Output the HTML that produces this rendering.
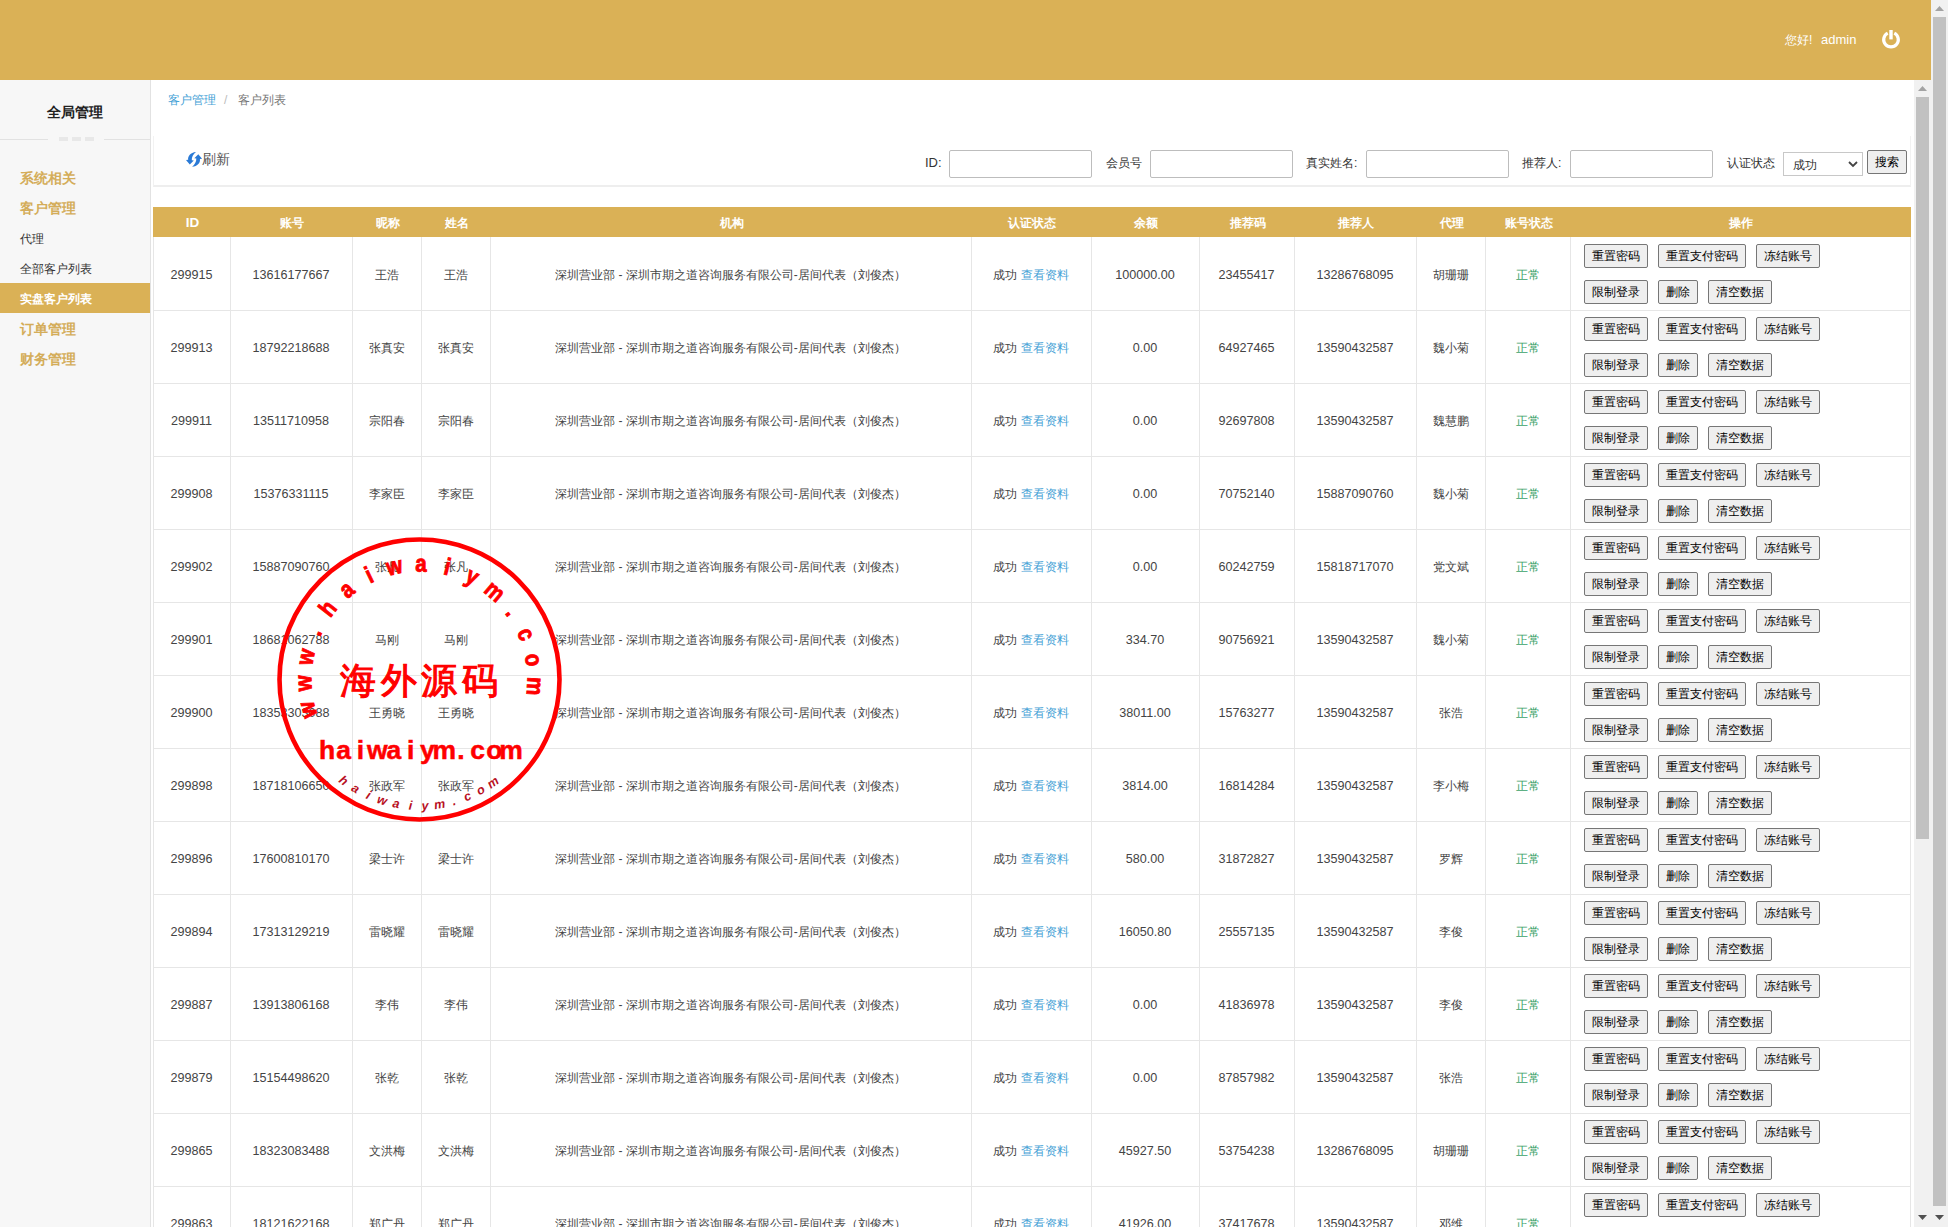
<!DOCTYPE html><html><head><meta charset="utf-8"><title>客户列表</title><style>
*{margin:0;padding:0;box-sizing:border-box}
html,body{width:1948px;height:1227px;overflow:hidden;background:#fff;font-family:"Liberation Sans",sans-serif;color:#333}
.a{position:absolute}
.hdr{left:0;top:0;width:1931px;height:80px;background:#dab156}
.side{left:0;top:80px;width:150px;height:1147px;background:#f7f7f7}
.sideb{left:150px;top:80px;width:1px;height:1147px;background:#e2e2e2}
.t{position:absolute;white-space:nowrap;line-height:1}
.c{position:absolute;text-align:center;white-space:nowrap;font-size:12.5px;color:#444}
.hl{position:absolute;height:1px;background:#e6e6e6}
.vl{position:absolute;width:1px;background:#e6e6e6}
.btn{position:absolute;height:24px;border:1px solid #767676;border-radius:2px;background:#efefef;font-size:12px;color:#000;text-align:center;line-height:23px;white-space:nowrap}
.inp{position:absolute;height:28px;border:1px solid #bdbdbd;border-radius:2px;background:#fff}
.sb{position:absolute;background:#f1f1f1}
.th{position:absolute;background:#c1c1c1}
</style></head><body>
<div class="a hdr"></div>
<div class="t" style="left:1785px;top:34px;font-size:12px;color:#fff">您好</div><div class="t" style="left:1809px;top:34px;font-size:12px;color:#fff">!</div><div class="t" style="left:1821px;top:33px;font-size:13px;color:#fff">admin</div>
<svg class="a" style="left:1880px;top:29px" width="22" height="22" viewBox="0 0 22 22"><path d="M7.7 4.1 A7.3 7.3 0 1 0 14.3 4.1" fill="none" stroke="#fff" stroke-width="3.2"/><rect x="9.3" y="1" width="3.4" height="9.4" fill="#fff"/></svg>
<div class="sb" style="left:1931px;top:0;width:17px;height:1227px"></div>
<div class="th" style="left:1933px;top:17px;width:13px;height:1189px"></div>
<div class="a side"></div><div class="a sideb"></div>
<div class="t" style="left:47px;top:105px;font-size:14px;font-weight:bold;color:#222">全局管理</div>
<div class="a" style="left:0;top:139px;width:48px;height:1px;background:#e2e2e2"></div>
<div class="a" style="left:104px;top:139px;width:46px;height:1px;background:#e2e2e2"></div>
<div class="a" style="left:59px;top:137px;width:9px;height:4px;background:#e8e8e8"></div>
<div class="a" style="left:72px;top:137px;width:9px;height:4px;background:#e8e8e8"></div>
<div class="a" style="left:85px;top:137px;width:9px;height:4px;background:#e8e8e8"></div>
<div class="t" style="left:20px;top:171px;font-size:14px;font-weight:bold;color:#d4ad5a">系统相关</div>
<div class="t" style="left:20px;top:201px;font-size:14px;font-weight:bold;color:#d4ad5a">客户管理</div>
<div class="t" style="left:20px;top:233px;font-size:12px;color:#333">代理</div>
<div class="t" style="left:20px;top:263px;font-size:12px;color:#333">全部客户列表</div>
<div class="a" style="left:0;top:283px;width:150px;height:30px;background:#dab156"></div>
<div class="t" style="left:20px;top:293px;font-size:12px;font-weight:bold;color:#fff">实盘客户列表</div>
<div class="t" style="left:20px;top:322px;font-size:14px;font-weight:bold;color:#d4ad5a">订单管理</div>
<div class="t" style="left:20px;top:352px;font-size:14px;font-weight:bold;color:#d4ad5a">财务管理</div>
<div class="sb" style="left:1914px;top:80px;width:17px;height:1147px"></div>
<div class="th" style="left:1916px;top:97px;width:13px;height:742px"></div>
<div class="t" style="left:168px;top:94px;font-size:12px;color:#45a2d6">客户管理</div>
<div class="t" style="left:224px;top:94px;font-size:12px;color:#bbb">/</div>
<div class="t" style="left:238px;top:94px;font-size:12px;color:#777">客户列表</div>
<div class="a" style="left:153px;top:136px;width:1758px;height:51px;border-left:1px solid #f2f2f2;border-right:1px solid #f2f2f2;border-bottom:2px solid #eeeeee"></div>
<div class="t" style="left:202px;top:152px;font-size:14px;color:#555">刷新</div>
<svg class="a" style="left:186px;top:152px" width="17" height="15" viewBox="0 0 17 15"><g fill="#2a7ad6"><path d="M10 0 C4.5 0.5 1.5 4.2 2.2 7.8 L0 8 L3.8 12.4 L7.8 8.4 L5.8 8.2 C5.6 5.4 7.2 2.2 10 0 Z"/><path transform="rotate(180 8.05 7.35)" d="M10 0 C4.5 0.5 1.5 4.2 2.2 7.8 L0 8 L3.8 12.4 L7.8 8.4 L5.8 8.2 C5.6 5.4 7.2 2.2 10 0 Z"/></g></svg>
<div class="t" style="left:925px;top:156px;font-size:13px;color:#333">ID:</div>
<div class="inp" style="left:949px;top:150px;width:143px"></div>
<div class="t" style="left:1106px;top:157px;font-size:12px;color:#333">会员号</div>
<div class="inp" style="left:1150px;top:150px;width:143px"></div>
<div class="t" style="left:1306px;top:157px;font-size:12px;color:#333">真实姓名:</div>
<div class="inp" style="left:1366px;top:150px;width:143px"></div>
<div class="t" style="left:1522px;top:157px;font-size:12px;color:#333">推荐人:</div>
<div class="inp" style="left:1570px;top:150px;width:143px"></div>
<div class="t" style="left:1727px;top:157px;font-size:12px;color:#333">认证状态</div>
<div class="a" style="left:1783px;top:152px;width:80px;height:24px;border:1px solid #c8c8c8;background:#fff"></div>
<div class="t" style="left:1793px;top:159px;font-size:12px;color:#333">成功</div>
<svg class="a" style="left:1848px;top:161px" width="10" height="7" viewBox="0 0 10 7"><path d="M1 1 L5 5 L9 1" fill="none" stroke="#444" stroke-width="1.8"/></svg>
<div class="btn" style="left:1867px;top:150px;width:40px">搜索</div>
<div class="a" style="left:153px;top:207px;width:1758px;height:30px;background:#dab156"></div>
<div class="c" style="left:154px;top:216px;width:77px;font-weight:bold;color:#fff;font-size:13.5px;line-height:14px;">ID</div>
<div class="c" style="left:231px;top:216px;width:122px;font-weight:bold;color:#fff;font-size:12px;line-height:14px;">账号</div>
<div class="c" style="left:353px;top:216px;width:69px;font-weight:bold;color:#fff;font-size:12px;line-height:14px;">昵称</div>
<div class="c" style="left:422px;top:216px;width:69px;font-weight:bold;color:#fff;font-size:12px;line-height:14px;">姓名</div>
<div class="c" style="left:491px;top:216px;width:481px;font-weight:bold;color:#fff;font-size:12px;line-height:14px;">机构</div>
<div class="c" style="left:972px;top:216px;width:120px;font-weight:bold;color:#fff;font-size:12px;line-height:14px;">认证状态</div>
<div class="c" style="left:1092px;top:216px;width:108px;font-weight:bold;color:#fff;font-size:12px;line-height:14px;">余额</div>
<div class="c" style="left:1200px;top:216px;width:95px;font-weight:bold;color:#fff;font-size:12px;line-height:14px;">推荐码</div>
<div class="c" style="left:1295px;top:216px;width:122px;font-weight:bold;color:#fff;font-size:12px;line-height:14px;">推荐人</div>
<div class="c" style="left:1417px;top:216px;width:69px;font-weight:bold;color:#fff;font-size:12px;line-height:14px;">代理</div>
<div class="c" style="left:1486px;top:216px;width:85px;font-weight:bold;color:#fff;font-size:12px;line-height:14px;">账号状态</div>
<div class="c" style="left:1571px;top:216px;width:340px;font-weight:bold;color:#fff;font-size:12px;line-height:14px;">操作</div>
<div class="vl" style="left:153px;top:237px;height:990px"></div>
<div class="vl" style="left:230px;top:237px;height:990px"></div>
<div class="vl" style="left:352px;top:237px;height:990px"></div>
<div class="vl" style="left:421px;top:237px;height:990px"></div>
<div class="vl" style="left:490px;top:237px;height:990px"></div>
<div class="vl" style="left:971px;top:237px;height:990px"></div>
<div class="vl" style="left:1091px;top:237px;height:990px"></div>
<div class="vl" style="left:1199px;top:237px;height:990px"></div>
<div class="vl" style="left:1294px;top:237px;height:990px"></div>
<div class="vl" style="left:1416px;top:237px;height:990px"></div>
<div class="vl" style="left:1485px;top:237px;height:990px"></div>
<div class="vl" style="left:1570px;top:237px;height:990px"></div>
<div class="vl" style="left:1910px;top:237px;height:990px"></div>
<div class="hl" style="left:153px;top:310px;width:1758px"></div>
<div class="hl" style="left:153px;top:383px;width:1758px"></div>
<div class="hl" style="left:153px;top:456px;width:1758px"></div>
<div class="hl" style="left:153px;top:529px;width:1758px"></div>
<div class="hl" style="left:153px;top:602px;width:1758px"></div>
<div class="hl" style="left:153px;top:675px;width:1758px"></div>
<div class="hl" style="left:153px;top:748px;width:1758px"></div>
<div class="hl" style="left:153px;top:821px;width:1758px"></div>
<div class="hl" style="left:153px;top:894px;width:1758px"></div>
<div class="hl" style="left:153px;top:967px;width:1758px"></div>
<div class="hl" style="left:153px;top:1040px;width:1758px"></div>
<div class="hl" style="left:153px;top:1113px;width:1758px"></div>
<div class="hl" style="left:153px;top:1186px;width:1758px"></div>
<div class="c" style="left:153px;top:268px;width:77px;line-height:14px;font-size:12.6px">299915</div>
<div class="c" style="left:230px;top:268px;width:122px;line-height:14px;font-size:12.6px">13616177667</div>
<div class="c" style="left:352px;top:268px;width:69px;line-height:14px;font-size:12px">王浩</div>
<div class="c" style="left:421px;top:268px;width:69px;line-height:14px;font-size:12px">王浩</div>
<div class="c" style="left:490px;top:268px;width:481px;line-height:14px;font-size:12px">深圳营业部 - 深圳市期之道咨询服务有限公司-居间代表（刘俊杰）</div>
<div class="c" style="left:971px;top:268px;width:120px;line-height:14px;font-size:12px">成功 <span style="color:#45a2d6">查看资料</span></div>
<div class="c" style="left:1091px;top:268px;width:108px;line-height:14px;font-size:12.6px">100000.00</div>
<div class="c" style="left:1199px;top:268px;width:95px;line-height:14px;font-size:12.6px">23455417</div>
<div class="c" style="left:1294px;top:268px;width:122px;line-height:14px;font-size:12.6px">13286768095</div>
<div class="c" style="left:1416px;top:268px;width:69px;line-height:14px;font-size:12px">胡珊珊</div>
<div class="c" style="left:1485px;top:268px;width:85px;line-height:14px;color:#3ba268;font-size:12px">正常</div>
<div class="btn" style="left:1584px;top:244px;width:64px">重置密码</div>
<div class="btn" style="left:1658px;top:244px;width:88px">重置支付密码</div>
<div class="btn" style="left:1756px;top:244px;width:64px">冻结账号</div>
<div class="btn" style="left:1584px;top:280px;width:64px">限制登录</div>
<div class="btn" style="left:1658px;top:280px;width:40px">删除</div>
<div class="btn" style="left:1708px;top:280px;width:64px">清空数据</div>
<div class="c" style="left:153px;top:341px;width:77px;line-height:14px;font-size:12.6px">299913</div>
<div class="c" style="left:230px;top:341px;width:122px;line-height:14px;font-size:12.6px">18792218688</div>
<div class="c" style="left:352px;top:341px;width:69px;line-height:14px;font-size:12px">张真安</div>
<div class="c" style="left:421px;top:341px;width:69px;line-height:14px;font-size:12px">张真安</div>
<div class="c" style="left:490px;top:341px;width:481px;line-height:14px;font-size:12px">深圳营业部 - 深圳市期之道咨询服务有限公司-居间代表（刘俊杰）</div>
<div class="c" style="left:971px;top:341px;width:120px;line-height:14px;font-size:12px">成功 <span style="color:#45a2d6">查看资料</span></div>
<div class="c" style="left:1091px;top:341px;width:108px;line-height:14px;font-size:12.6px">0.00</div>
<div class="c" style="left:1199px;top:341px;width:95px;line-height:14px;font-size:12.6px">64927465</div>
<div class="c" style="left:1294px;top:341px;width:122px;line-height:14px;font-size:12.6px">13590432587</div>
<div class="c" style="left:1416px;top:341px;width:69px;line-height:14px;font-size:12px">魏小菊</div>
<div class="c" style="left:1485px;top:341px;width:85px;line-height:14px;color:#3ba268;font-size:12px">正常</div>
<div class="btn" style="left:1584px;top:317px;width:64px">重置密码</div>
<div class="btn" style="left:1658px;top:317px;width:88px">重置支付密码</div>
<div class="btn" style="left:1756px;top:317px;width:64px">冻结账号</div>
<div class="btn" style="left:1584px;top:353px;width:64px">限制登录</div>
<div class="btn" style="left:1658px;top:353px;width:40px">删除</div>
<div class="btn" style="left:1708px;top:353px;width:64px">清空数据</div>
<div class="c" style="left:153px;top:414px;width:77px;line-height:14px;font-size:12.6px">299911</div>
<div class="c" style="left:230px;top:414px;width:122px;line-height:14px;font-size:12.6px">13511710958</div>
<div class="c" style="left:352px;top:414px;width:69px;line-height:14px;font-size:12px">宗阳春</div>
<div class="c" style="left:421px;top:414px;width:69px;line-height:14px;font-size:12px">宗阳春</div>
<div class="c" style="left:490px;top:414px;width:481px;line-height:14px;font-size:12px">深圳营业部 - 深圳市期之道咨询服务有限公司-居间代表（刘俊杰）</div>
<div class="c" style="left:971px;top:414px;width:120px;line-height:14px;font-size:12px">成功 <span style="color:#45a2d6">查看资料</span></div>
<div class="c" style="left:1091px;top:414px;width:108px;line-height:14px;font-size:12.6px">0.00</div>
<div class="c" style="left:1199px;top:414px;width:95px;line-height:14px;font-size:12.6px">92697808</div>
<div class="c" style="left:1294px;top:414px;width:122px;line-height:14px;font-size:12.6px">13590432587</div>
<div class="c" style="left:1416px;top:414px;width:69px;line-height:14px;font-size:12px">魏慧鹏</div>
<div class="c" style="left:1485px;top:414px;width:85px;line-height:14px;color:#3ba268;font-size:12px">正常</div>
<div class="btn" style="left:1584px;top:390px;width:64px">重置密码</div>
<div class="btn" style="left:1658px;top:390px;width:88px">重置支付密码</div>
<div class="btn" style="left:1756px;top:390px;width:64px">冻结账号</div>
<div class="btn" style="left:1584px;top:426px;width:64px">限制登录</div>
<div class="btn" style="left:1658px;top:426px;width:40px">删除</div>
<div class="btn" style="left:1708px;top:426px;width:64px">清空数据</div>
<div class="c" style="left:153px;top:487px;width:77px;line-height:14px;font-size:12.6px">299908</div>
<div class="c" style="left:230px;top:487px;width:122px;line-height:14px;font-size:12.6px">15376331115</div>
<div class="c" style="left:352px;top:487px;width:69px;line-height:14px;font-size:12px">李家臣</div>
<div class="c" style="left:421px;top:487px;width:69px;line-height:14px;font-size:12px">李家臣</div>
<div class="c" style="left:490px;top:487px;width:481px;line-height:14px;font-size:12px">深圳营业部 - 深圳市期之道咨询服务有限公司-居间代表（刘俊杰）</div>
<div class="c" style="left:971px;top:487px;width:120px;line-height:14px;font-size:12px">成功 <span style="color:#45a2d6">查看资料</span></div>
<div class="c" style="left:1091px;top:487px;width:108px;line-height:14px;font-size:12.6px">0.00</div>
<div class="c" style="left:1199px;top:487px;width:95px;line-height:14px;font-size:12.6px">70752140</div>
<div class="c" style="left:1294px;top:487px;width:122px;line-height:14px;font-size:12.6px">15887090760</div>
<div class="c" style="left:1416px;top:487px;width:69px;line-height:14px;font-size:12px">魏小菊</div>
<div class="c" style="left:1485px;top:487px;width:85px;line-height:14px;color:#3ba268;font-size:12px">正常</div>
<div class="btn" style="left:1584px;top:463px;width:64px">重置密码</div>
<div class="btn" style="left:1658px;top:463px;width:88px">重置支付密码</div>
<div class="btn" style="left:1756px;top:463px;width:64px">冻结账号</div>
<div class="btn" style="left:1584px;top:499px;width:64px">限制登录</div>
<div class="btn" style="left:1658px;top:499px;width:40px">删除</div>
<div class="btn" style="left:1708px;top:499px;width:64px">清空数据</div>
<div class="c" style="left:153px;top:560px;width:77px;line-height:14px;font-size:12.6px">299902</div>
<div class="c" style="left:230px;top:560px;width:122px;line-height:14px;font-size:12.6px">15887090760</div>
<div class="c" style="left:352px;top:560px;width:69px;line-height:14px;font-size:12px">张凡</div>
<div class="c" style="left:421px;top:560px;width:69px;line-height:14px;font-size:12px">张凡</div>
<div class="c" style="left:490px;top:560px;width:481px;line-height:14px;font-size:12px">深圳营业部 - 深圳市期之道咨询服务有限公司-居间代表（刘俊杰）</div>
<div class="c" style="left:971px;top:560px;width:120px;line-height:14px;font-size:12px">成功 <span style="color:#45a2d6">查看资料</span></div>
<div class="c" style="left:1091px;top:560px;width:108px;line-height:14px;font-size:12.6px">0.00</div>
<div class="c" style="left:1199px;top:560px;width:95px;line-height:14px;font-size:12.6px">60242759</div>
<div class="c" style="left:1294px;top:560px;width:122px;line-height:14px;font-size:12.6px">15818717070</div>
<div class="c" style="left:1416px;top:560px;width:69px;line-height:14px;font-size:12px">党文斌</div>
<div class="c" style="left:1485px;top:560px;width:85px;line-height:14px;color:#3ba268;font-size:12px">正常</div>
<div class="btn" style="left:1584px;top:536px;width:64px">重置密码</div>
<div class="btn" style="left:1658px;top:536px;width:88px">重置支付密码</div>
<div class="btn" style="left:1756px;top:536px;width:64px">冻结账号</div>
<div class="btn" style="left:1584px;top:572px;width:64px">限制登录</div>
<div class="btn" style="left:1658px;top:572px;width:40px">删除</div>
<div class="btn" style="left:1708px;top:572px;width:64px">清空数据</div>
<div class="c" style="left:153px;top:633px;width:77px;line-height:14px;font-size:12.6px">299901</div>
<div class="c" style="left:230px;top:633px;width:122px;line-height:14px;font-size:12.6px">18681062788</div>
<div class="c" style="left:352px;top:633px;width:69px;line-height:14px;font-size:12px">马刚</div>
<div class="c" style="left:421px;top:633px;width:69px;line-height:14px;font-size:12px">马刚</div>
<div class="c" style="left:490px;top:633px;width:481px;line-height:14px;font-size:12px">深圳营业部 - 深圳市期之道咨询服务有限公司-居间代表（刘俊杰）</div>
<div class="c" style="left:971px;top:633px;width:120px;line-height:14px;font-size:12px">成功 <span style="color:#45a2d6">查看资料</span></div>
<div class="c" style="left:1091px;top:633px;width:108px;line-height:14px;font-size:12.6px">334.70</div>
<div class="c" style="left:1199px;top:633px;width:95px;line-height:14px;font-size:12.6px">90756921</div>
<div class="c" style="left:1294px;top:633px;width:122px;line-height:14px;font-size:12.6px">13590432587</div>
<div class="c" style="left:1416px;top:633px;width:69px;line-height:14px;font-size:12px">魏小菊</div>
<div class="c" style="left:1485px;top:633px;width:85px;line-height:14px;color:#3ba268;font-size:12px">正常</div>
<div class="btn" style="left:1584px;top:609px;width:64px">重置密码</div>
<div class="btn" style="left:1658px;top:609px;width:88px">重置支付密码</div>
<div class="btn" style="left:1756px;top:609px;width:64px">冻结账号</div>
<div class="btn" style="left:1584px;top:645px;width:64px">限制登录</div>
<div class="btn" style="left:1658px;top:645px;width:40px">删除</div>
<div class="btn" style="left:1708px;top:645px;width:64px">清空数据</div>
<div class="c" style="left:153px;top:706px;width:77px;line-height:14px;font-size:12.6px">299900</div>
<div class="c" style="left:230px;top:706px;width:122px;line-height:14px;font-size:12.6px">18353303088</div>
<div class="c" style="left:352px;top:706px;width:69px;line-height:14px;font-size:12px">王勇晓</div>
<div class="c" style="left:421px;top:706px;width:69px;line-height:14px;font-size:12px">王勇晓</div>
<div class="c" style="left:490px;top:706px;width:481px;line-height:14px;font-size:12px">深圳营业部 - 深圳市期之道咨询服务有限公司-居间代表（刘俊杰）</div>
<div class="c" style="left:971px;top:706px;width:120px;line-height:14px;font-size:12px">成功 <span style="color:#45a2d6">查看资料</span></div>
<div class="c" style="left:1091px;top:706px;width:108px;line-height:14px;font-size:12.6px">38011.00</div>
<div class="c" style="left:1199px;top:706px;width:95px;line-height:14px;font-size:12.6px">15763277</div>
<div class="c" style="left:1294px;top:706px;width:122px;line-height:14px;font-size:12.6px">13590432587</div>
<div class="c" style="left:1416px;top:706px;width:69px;line-height:14px;font-size:12px">张浩</div>
<div class="c" style="left:1485px;top:706px;width:85px;line-height:14px;color:#3ba268;font-size:12px">正常</div>
<div class="btn" style="left:1584px;top:682px;width:64px">重置密码</div>
<div class="btn" style="left:1658px;top:682px;width:88px">重置支付密码</div>
<div class="btn" style="left:1756px;top:682px;width:64px">冻结账号</div>
<div class="btn" style="left:1584px;top:718px;width:64px">限制登录</div>
<div class="btn" style="left:1658px;top:718px;width:40px">删除</div>
<div class="btn" style="left:1708px;top:718px;width:64px">清空数据</div>
<div class="c" style="left:153px;top:779px;width:77px;line-height:14px;font-size:12.6px">299898</div>
<div class="c" style="left:230px;top:779px;width:122px;line-height:14px;font-size:12.6px">18718106650</div>
<div class="c" style="left:352px;top:779px;width:69px;line-height:14px;font-size:12px">张政军</div>
<div class="c" style="left:421px;top:779px;width:69px;line-height:14px;font-size:12px">张政军</div>
<div class="c" style="left:490px;top:779px;width:481px;line-height:14px;font-size:12px">深圳营业部 - 深圳市期之道咨询服务有限公司-居间代表（刘俊杰）</div>
<div class="c" style="left:971px;top:779px;width:120px;line-height:14px;font-size:12px">成功 <span style="color:#45a2d6">查看资料</span></div>
<div class="c" style="left:1091px;top:779px;width:108px;line-height:14px;font-size:12.6px">3814.00</div>
<div class="c" style="left:1199px;top:779px;width:95px;line-height:14px;font-size:12.6px">16814284</div>
<div class="c" style="left:1294px;top:779px;width:122px;line-height:14px;font-size:12.6px">13590432587</div>
<div class="c" style="left:1416px;top:779px;width:69px;line-height:14px;font-size:12px">李小梅</div>
<div class="c" style="left:1485px;top:779px;width:85px;line-height:14px;color:#3ba268;font-size:12px">正常</div>
<div class="btn" style="left:1584px;top:755px;width:64px">重置密码</div>
<div class="btn" style="left:1658px;top:755px;width:88px">重置支付密码</div>
<div class="btn" style="left:1756px;top:755px;width:64px">冻结账号</div>
<div class="btn" style="left:1584px;top:791px;width:64px">限制登录</div>
<div class="btn" style="left:1658px;top:791px;width:40px">删除</div>
<div class="btn" style="left:1708px;top:791px;width:64px">清空数据</div>
<div class="c" style="left:153px;top:852px;width:77px;line-height:14px;font-size:12.6px">299896</div>
<div class="c" style="left:230px;top:852px;width:122px;line-height:14px;font-size:12.6px">17600810170</div>
<div class="c" style="left:352px;top:852px;width:69px;line-height:14px;font-size:12px">梁士许</div>
<div class="c" style="left:421px;top:852px;width:69px;line-height:14px;font-size:12px">梁士许</div>
<div class="c" style="left:490px;top:852px;width:481px;line-height:14px;font-size:12px">深圳营业部 - 深圳市期之道咨询服务有限公司-居间代表（刘俊杰）</div>
<div class="c" style="left:971px;top:852px;width:120px;line-height:14px;font-size:12px">成功 <span style="color:#45a2d6">查看资料</span></div>
<div class="c" style="left:1091px;top:852px;width:108px;line-height:14px;font-size:12.6px">580.00</div>
<div class="c" style="left:1199px;top:852px;width:95px;line-height:14px;font-size:12.6px">31872827</div>
<div class="c" style="left:1294px;top:852px;width:122px;line-height:14px;font-size:12.6px">13590432587</div>
<div class="c" style="left:1416px;top:852px;width:69px;line-height:14px;font-size:12px">罗辉</div>
<div class="c" style="left:1485px;top:852px;width:85px;line-height:14px;color:#3ba268;font-size:12px">正常</div>
<div class="btn" style="left:1584px;top:828px;width:64px">重置密码</div>
<div class="btn" style="left:1658px;top:828px;width:88px">重置支付密码</div>
<div class="btn" style="left:1756px;top:828px;width:64px">冻结账号</div>
<div class="btn" style="left:1584px;top:864px;width:64px">限制登录</div>
<div class="btn" style="left:1658px;top:864px;width:40px">删除</div>
<div class="btn" style="left:1708px;top:864px;width:64px">清空数据</div>
<div class="c" style="left:153px;top:925px;width:77px;line-height:14px;font-size:12.6px">299894</div>
<div class="c" style="left:230px;top:925px;width:122px;line-height:14px;font-size:12.6px">17313129219</div>
<div class="c" style="left:352px;top:925px;width:69px;line-height:14px;font-size:12px">雷晓耀</div>
<div class="c" style="left:421px;top:925px;width:69px;line-height:14px;font-size:12px">雷晓耀</div>
<div class="c" style="left:490px;top:925px;width:481px;line-height:14px;font-size:12px">深圳营业部 - 深圳市期之道咨询服务有限公司-居间代表（刘俊杰）</div>
<div class="c" style="left:971px;top:925px;width:120px;line-height:14px;font-size:12px">成功 <span style="color:#45a2d6">查看资料</span></div>
<div class="c" style="left:1091px;top:925px;width:108px;line-height:14px;font-size:12.6px">16050.80</div>
<div class="c" style="left:1199px;top:925px;width:95px;line-height:14px;font-size:12.6px">25557135</div>
<div class="c" style="left:1294px;top:925px;width:122px;line-height:14px;font-size:12.6px">13590432587</div>
<div class="c" style="left:1416px;top:925px;width:69px;line-height:14px;font-size:12px">李俊</div>
<div class="c" style="left:1485px;top:925px;width:85px;line-height:14px;color:#3ba268;font-size:12px">正常</div>
<div class="btn" style="left:1584px;top:901px;width:64px">重置密码</div>
<div class="btn" style="left:1658px;top:901px;width:88px">重置支付密码</div>
<div class="btn" style="left:1756px;top:901px;width:64px">冻结账号</div>
<div class="btn" style="left:1584px;top:937px;width:64px">限制登录</div>
<div class="btn" style="left:1658px;top:937px;width:40px">删除</div>
<div class="btn" style="left:1708px;top:937px;width:64px">清空数据</div>
<div class="c" style="left:153px;top:998px;width:77px;line-height:14px;font-size:12.6px">299887</div>
<div class="c" style="left:230px;top:998px;width:122px;line-height:14px;font-size:12.6px">13913806168</div>
<div class="c" style="left:352px;top:998px;width:69px;line-height:14px;font-size:12px">李伟</div>
<div class="c" style="left:421px;top:998px;width:69px;line-height:14px;font-size:12px">李伟</div>
<div class="c" style="left:490px;top:998px;width:481px;line-height:14px;font-size:12px">深圳营业部 - 深圳市期之道咨询服务有限公司-居间代表（刘俊杰）</div>
<div class="c" style="left:971px;top:998px;width:120px;line-height:14px;font-size:12px">成功 <span style="color:#45a2d6">查看资料</span></div>
<div class="c" style="left:1091px;top:998px;width:108px;line-height:14px;font-size:12.6px">0.00</div>
<div class="c" style="left:1199px;top:998px;width:95px;line-height:14px;font-size:12.6px">41836978</div>
<div class="c" style="left:1294px;top:998px;width:122px;line-height:14px;font-size:12.6px">13590432587</div>
<div class="c" style="left:1416px;top:998px;width:69px;line-height:14px;font-size:12px">李俊</div>
<div class="c" style="left:1485px;top:998px;width:85px;line-height:14px;color:#3ba268;font-size:12px">正常</div>
<div class="btn" style="left:1584px;top:974px;width:64px">重置密码</div>
<div class="btn" style="left:1658px;top:974px;width:88px">重置支付密码</div>
<div class="btn" style="left:1756px;top:974px;width:64px">冻结账号</div>
<div class="btn" style="left:1584px;top:1010px;width:64px">限制登录</div>
<div class="btn" style="left:1658px;top:1010px;width:40px">删除</div>
<div class="btn" style="left:1708px;top:1010px;width:64px">清空数据</div>
<div class="c" style="left:153px;top:1071px;width:77px;line-height:14px;font-size:12.6px">299879</div>
<div class="c" style="left:230px;top:1071px;width:122px;line-height:14px;font-size:12.6px">15154498620</div>
<div class="c" style="left:352px;top:1071px;width:69px;line-height:14px;font-size:12px">张乾</div>
<div class="c" style="left:421px;top:1071px;width:69px;line-height:14px;font-size:12px">张乾</div>
<div class="c" style="left:490px;top:1071px;width:481px;line-height:14px;font-size:12px">深圳营业部 - 深圳市期之道咨询服务有限公司-居间代表（刘俊杰）</div>
<div class="c" style="left:971px;top:1071px;width:120px;line-height:14px;font-size:12px">成功 <span style="color:#45a2d6">查看资料</span></div>
<div class="c" style="left:1091px;top:1071px;width:108px;line-height:14px;font-size:12.6px">0.00</div>
<div class="c" style="left:1199px;top:1071px;width:95px;line-height:14px;font-size:12.6px">87857982</div>
<div class="c" style="left:1294px;top:1071px;width:122px;line-height:14px;font-size:12.6px">13590432587</div>
<div class="c" style="left:1416px;top:1071px;width:69px;line-height:14px;font-size:12px">张浩</div>
<div class="c" style="left:1485px;top:1071px;width:85px;line-height:14px;color:#3ba268;font-size:12px">正常</div>
<div class="btn" style="left:1584px;top:1047px;width:64px">重置密码</div>
<div class="btn" style="left:1658px;top:1047px;width:88px">重置支付密码</div>
<div class="btn" style="left:1756px;top:1047px;width:64px">冻结账号</div>
<div class="btn" style="left:1584px;top:1083px;width:64px">限制登录</div>
<div class="btn" style="left:1658px;top:1083px;width:40px">删除</div>
<div class="btn" style="left:1708px;top:1083px;width:64px">清空数据</div>
<div class="c" style="left:153px;top:1144px;width:77px;line-height:14px;font-size:12.6px">299865</div>
<div class="c" style="left:230px;top:1144px;width:122px;line-height:14px;font-size:12.6px">18323083488</div>
<div class="c" style="left:352px;top:1144px;width:69px;line-height:14px;font-size:12px">文洪梅</div>
<div class="c" style="left:421px;top:1144px;width:69px;line-height:14px;font-size:12px">文洪梅</div>
<div class="c" style="left:490px;top:1144px;width:481px;line-height:14px;font-size:12px">深圳营业部 - 深圳市期之道咨询服务有限公司-居间代表（刘俊杰）</div>
<div class="c" style="left:971px;top:1144px;width:120px;line-height:14px;font-size:12px">成功 <span style="color:#45a2d6">查看资料</span></div>
<div class="c" style="left:1091px;top:1144px;width:108px;line-height:14px;font-size:12.6px">45927.50</div>
<div class="c" style="left:1199px;top:1144px;width:95px;line-height:14px;font-size:12.6px">53754238</div>
<div class="c" style="left:1294px;top:1144px;width:122px;line-height:14px;font-size:12.6px">13286768095</div>
<div class="c" style="left:1416px;top:1144px;width:69px;line-height:14px;font-size:12px">胡珊珊</div>
<div class="c" style="left:1485px;top:1144px;width:85px;line-height:14px;color:#3ba268;font-size:12px">正常</div>
<div class="btn" style="left:1584px;top:1120px;width:64px">重置密码</div>
<div class="btn" style="left:1658px;top:1120px;width:88px">重置支付密码</div>
<div class="btn" style="left:1756px;top:1120px;width:64px">冻结账号</div>
<div class="btn" style="left:1584px;top:1156px;width:64px">限制登录</div>
<div class="btn" style="left:1658px;top:1156px;width:40px">删除</div>
<div class="btn" style="left:1708px;top:1156px;width:64px">清空数据</div>
<div class="c" style="left:153px;top:1217px;width:77px;line-height:14px;font-size:12.6px">299863</div>
<div class="c" style="left:230px;top:1217px;width:122px;line-height:14px;font-size:12.6px">18121622168</div>
<div class="c" style="left:352px;top:1217px;width:69px;line-height:14px;font-size:12px">郑广丹</div>
<div class="c" style="left:421px;top:1217px;width:69px;line-height:14px;font-size:12px">郑广丹</div>
<div class="c" style="left:490px;top:1217px;width:481px;line-height:14px;font-size:12px">深圳营业部 - 深圳市期之道咨询服务有限公司-居间代表（刘俊杰）</div>
<div class="c" style="left:971px;top:1217px;width:120px;line-height:14px;font-size:12px">成功 <span style="color:#45a2d6">查看资料</span></div>
<div class="c" style="left:1091px;top:1217px;width:108px;line-height:14px;font-size:12.6px">41926.00</div>
<div class="c" style="left:1199px;top:1217px;width:95px;line-height:14px;font-size:12.6px">37417678</div>
<div class="c" style="left:1294px;top:1217px;width:122px;line-height:14px;font-size:12.6px">13590432587</div>
<div class="c" style="left:1416px;top:1217px;width:69px;line-height:14px;font-size:12px">邓维</div>
<div class="c" style="left:1485px;top:1217px;width:85px;line-height:14px;color:#3ba268;font-size:12px">正常</div>
<div class="btn" style="left:1584px;top:1193px;width:64px">重置密码</div>
<div class="btn" style="left:1658px;top:1193px;width:88px">重置支付密码</div>
<div class="btn" style="left:1756px;top:1193px;width:64px">冻结账号</div>
<div class="btn" style="left:1584px;top:1229px;width:64px">限制登录</div>
<div class="btn" style="left:1658px;top:1229px;width:40px">删除</div>
<div class="btn" style="left:1708px;top:1229px;width:64px">清空数据</div>
<svg class="a" style="left:270px;top:530px;overflow:visible" width="300" height="300" viewBox="0 0 300 300"><circle cx="149.5" cy="149.5" r="140" fill="none" stroke="#f00" stroke-width="4.6"/><text transform="translate(45.28 177.82) rotate(254.80) scale(0.85 1)" text-anchor="middle" font-family="Liberation Sans" font-weight="bold" font-size="24" fill="#f00" stroke="#f00" stroke-width="0.9">w</text><text transform="translate(41.56 153.19) rotate(268.04) scale(0.85 1)" text-anchor="middle" font-family="Liberation Sans" font-weight="bold" font-size="24" fill="#f00" stroke="#f00" stroke-width="0.9">w</text><text transform="translate(43.59 128.37) rotate(281.28) scale(0.85 1)" text-anchor="middle" font-family="Liberation Sans" font-weight="bold" font-size="24" fill="#f00" stroke="#f00" stroke-width="0.9">w</text><text transform="translate(51.24 104.68) rotate(294.52) scale(0.85 1)" text-anchor="middle" font-family="Liberation Sans" font-weight="bold" font-size="24" fill="#f00" stroke="#f00" stroke-width="0.9">.</text><text transform="translate(64.12 83.37) rotate(307.76) scale(0.85 1)" text-anchor="middle" font-family="Liberation Sans" font-weight="bold" font-size="24" fill="#f00" stroke="#f00" stroke-width="0.9">h</text><text transform="translate(81.53 65.57) rotate(321.00) scale(0.85 1)" text-anchor="middle" font-family="Liberation Sans" font-weight="bold" font-size="24" fill="#f00" stroke="#f00" stroke-width="0.9">a</text><text transform="translate(102.56 52.23) rotate(334.24) scale(0.85 1)" text-anchor="middle" font-family="Liberation Sans" font-weight="bold" font-size="24" fill="#f00" stroke="#f00" stroke-width="0.9">i</text><text transform="translate(126.09 44.07) rotate(347.48) scale(0.85 1)" text-anchor="middle" font-family="Liberation Sans" font-weight="bold" font-size="24" fill="#f00" stroke="#f00" stroke-width="0.9">w</text><text transform="translate(150.86 41.51) rotate(360.72) scale(0.85 1)" text-anchor="middle" font-family="Liberation Sans" font-weight="bold" font-size="24" fill="#f00" stroke="#f00" stroke-width="0.9">a</text><text transform="translate(175.55 44.69) rotate(373.96) scale(0.85 1)" text-anchor="middle" font-family="Liberation Sans" font-weight="bold" font-size="24" fill="#f00" stroke="#f00" stroke-width="0.9">i</text><text transform="translate(198.87 53.44) rotate(387.20) scale(0.85 1)" text-anchor="middle" font-family="Liberation Sans" font-weight="bold" font-size="24" fill="#f00" stroke="#f00" stroke-width="0.9">y</text><text transform="translate(219.55 67.30) rotate(400.44) scale(0.85 1)" text-anchor="middle" font-family="Liberation Sans" font-weight="bold" font-size="24" fill="#f00" stroke="#f00" stroke-width="0.9">m</text><text transform="translate(236.52 85.53) rotate(413.68) scale(0.85 1)" text-anchor="middle" font-family="Liberation Sans" font-weight="bold" font-size="24" fill="#f00" stroke="#f00" stroke-width="0.9">.</text><text transform="translate(248.86 107.16) rotate(426.92) scale(0.85 1)" text-anchor="middle" font-family="Liberation Sans" font-weight="bold" font-size="24" fill="#f00" stroke="#f00" stroke-width="0.9">c</text><text transform="translate(255.91 131.04) rotate(440.16) scale(0.85 1)" text-anchor="middle" font-family="Liberation Sans" font-weight="bold" font-size="24" fill="#f00" stroke="#f00" stroke-width="0.9">o</text><text transform="translate(257.31 155.91) rotate(453.40) scale(0.85 1)" text-anchor="middle" font-family="Liberation Sans" font-weight="bold" font-size="24" fill="#f00" stroke="#f00" stroke-width="0.9">m</text><text transform="translate(70.96 253.72) rotate(37.00)" text-anchor="middle" font-family="Liberation Sans" font-style="italic" font-weight="bold" font-size="12.5" fill="#b8101e">h</text><text transform="translate(83.44 262.05) rotate(30.41)" text-anchor="middle" font-family="Liberation Sans" font-style="italic" font-weight="bold" font-size="12.5" fill="#b8101e">a</text><text transform="translate(96.80 268.88) rotate(23.82)" text-anchor="middle" font-family="Liberation Sans" font-style="italic" font-weight="bold" font-size="12.5" fill="#b8101e">i</text><text transform="translate(110.84 274.14) rotate(17.23)" text-anchor="middle" font-family="Liberation Sans" font-style="italic" font-weight="bold" font-size="12.5" fill="#b8101e">w</text><text transform="translate(125.40 277.76) rotate(10.64)" text-anchor="middle" font-family="Liberation Sans" font-style="italic" font-weight="bold" font-size="12.5" fill="#b8101e">a</text><text transform="translate(140.28 279.67) rotate(4.05)" text-anchor="middle" font-family="Liberation Sans" font-style="italic" font-weight="bold" font-size="12.5" fill="#b8101e">i</text><text transform="translate(155.28 279.87) rotate(-2.54)" text-anchor="middle" font-family="Liberation Sans" font-style="italic" font-weight="bold" font-size="12.5" fill="#b8101e">y</text><text transform="translate(170.21 278.35) rotate(-9.13)" text-anchor="middle" font-family="Liberation Sans" font-style="italic" font-weight="bold" font-size="12.5" fill="#b8101e">m</text><text transform="translate(184.86 275.12) rotate(-15.72)" text-anchor="middle" font-family="Liberation Sans" font-style="italic" font-weight="bold" font-size="12.5" fill="#b8101e">.</text><text transform="translate(199.04 270.23) rotate(-22.31)" text-anchor="middle" font-family="Liberation Sans" font-style="italic" font-weight="bold" font-size="12.5" fill="#b8101e">c</text><text transform="translate(212.57 263.75) rotate(-28.90)" text-anchor="middle" font-family="Liberation Sans" font-style="italic" font-weight="bold" font-size="12.5" fill="#b8101e">o</text><text transform="translate(225.26 255.76) rotate(-35.49)" text-anchor="middle" font-family="Liberation Sans" font-style="italic" font-weight="bold" font-size="12.5" fill="#b8101e">m</text><text x="57.00" y="229" text-anchor="middle" font-family="Liberation Sans" font-weight="bold" font-size="26.5" fill="#f00" stroke="#f00" stroke-width="0.5">h</text><text x="73.74" y="229" text-anchor="middle" font-family="Liberation Sans" font-weight="bold" font-size="26.5" fill="#f00" stroke="#f00" stroke-width="0.5">a</text><text x="90.48" y="229" text-anchor="middle" font-family="Liberation Sans" font-weight="bold" font-size="26.5" fill="#f00" stroke="#f00" stroke-width="0.5">i</text><text x="107.22" y="229" text-anchor="middle" font-family="Liberation Sans" font-weight="bold" font-size="26.5" fill="#f00" stroke="#f00" stroke-width="0.5">w</text><text x="123.96" y="229" text-anchor="middle" font-family="Liberation Sans" font-weight="bold" font-size="26.5" fill="#f00" stroke="#f00" stroke-width="0.5">a</text><text x="140.70" y="229" text-anchor="middle" font-family="Liberation Sans" font-weight="bold" font-size="26.5" fill="#f00" stroke="#f00" stroke-width="0.5">i</text><text x="157.44" y="229" text-anchor="middle" font-family="Liberation Sans" font-weight="bold" font-size="26.5" fill="#f00" stroke="#f00" stroke-width="0.5">y</text><text x="174.18" y="229" text-anchor="middle" font-family="Liberation Sans" font-weight="bold" font-size="26.5" fill="#f00" stroke="#f00" stroke-width="0.5">m</text><text x="190.92" y="229" text-anchor="middle" font-family="Liberation Sans" font-weight="bold" font-size="26.5" fill="#f00" stroke="#f00" stroke-width="0.5">.</text><text x="207.66" y="229" text-anchor="middle" font-family="Liberation Sans" font-weight="bold" font-size="26.5" fill="#f00" stroke="#f00" stroke-width="0.5">c</text><text x="224.40" y="229" text-anchor="middle" font-family="Liberation Sans" font-weight="bold" font-size="26.5" fill="#f00" stroke="#f00" stroke-width="0.5">o</text><text x="241.14" y="229" text-anchor="middle" font-family="Liberation Sans" font-weight="bold" font-size="26.5" fill="#f00" stroke="#f00" stroke-width="0.5">m</text><text x="88.40" y="163" text-anchor="middle" font-family="Liberation Serif, serif" font-weight="400" font-size="36" fill="#f00" stroke="#f00" stroke-width="1.1">海</text><text x="128.90" y="163" text-anchor="middle" font-family="Liberation Serif, serif" font-weight="400" font-size="36" fill="#f00" stroke="#f00" stroke-width="1.1">外</text><text x="169.40" y="163" text-anchor="middle" font-family="Liberation Serif, serif" font-weight="400" font-size="36" fill="#f00" stroke="#f00" stroke-width="1.1">源</text><text x="209.90" y="163" text-anchor="middle" font-family="Liberation Serif, serif" font-weight="400" font-size="36" fill="#f00" stroke="#f00" stroke-width="1.1">码</text></svg>
<svg class="a" style="left:1935px;top:6px" width="9" height="5" viewBox="0 0 9 5"><path d="M0 5 L4.5 0 L9 5 Z" fill="#a3a3a3"/></svg>
<svg class="a" style="left:1918px;top:86px" width="9" height="5" viewBox="0 0 9 5"><path d="M0 5 L4.5 0 L9 5 Z" fill="#a3a3a3"/></svg>
<svg class="a" style="left:1935px;top:1215px" width="9" height="5" viewBox="0 0 9 5"><path d="M0 0 L4.5 5 L9 0 Z" fill="#505050"/></svg>
<svg class="a" style="left:1918px;top:1215px" width="9" height="5" viewBox="0 0 9 5"><path d="M0 0 L4.5 5 L9 0 Z" fill="#505050"/></svg>
</body></html>
